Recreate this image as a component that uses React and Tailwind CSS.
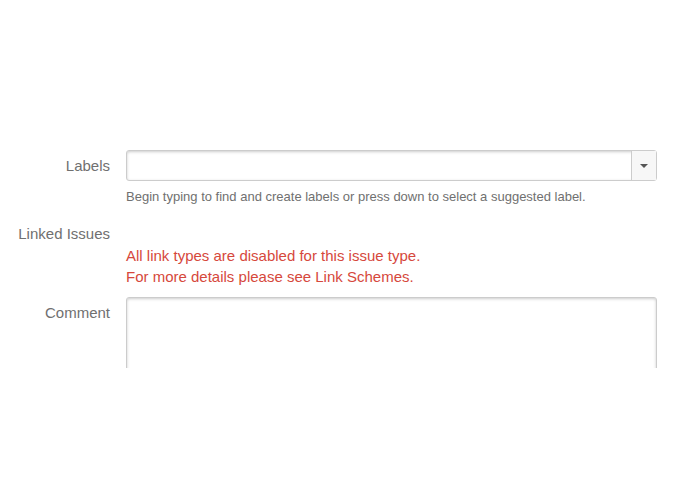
export default function App() {
  return (
    <div className="h-[494px] w-[695px] bg-white font-['Liberation_Sans',Arial,sans-serif]">
      <div className="h-[368px] overflow-hidden pt-[150px]">
        {/* Labels */}
        <div className="flex gap-4">
          <div className="w-[110px] shrink-0 pt-[6px] text-right text-[15px] leading-[20px] text-[#707070]">Labels</div>
          <div className="w-[531px]">
            <div className="flex h-[31px] rounded-[3px] border border-[#cccccc] shadow-[inset_0_1px_3px_#cccccc]">
              <div className="flex-1" />
              <div className="flex w-[25px] items-center justify-center border-l border-[#cccccc] bg-[#f7f7f7]">
                <svg width="8" height="4" viewBox="0 0 8 4">
                  <path d="M0 0h8L4 4z" fill="#555555" />
                </svg>
              </div>
            </div>
            <div className="mt-[8px] text-[13px] leading-[16px] text-[#707070]">
              Begin typing to find and create labels or press down to select a suggested label.
            </div>
          </div>
        </div>
        {/* Linked Issues */}
        <div className="mt-[19px] flex gap-4">
          <div className="w-[110px] shrink-0 text-right text-[15px] leading-[20px] text-[#707070]">Linked Issues</div>
          <div className="w-[531px] pt-[21px] text-[15px] leading-[21px] text-[#d6483c]">
            <div>All link types are disabled for this issue type.</div>
            <div>For more details please see Link Schemes.</div>
          </div>
        </div>
        {/* Comment */}
        <div className="mt-[10px] flex gap-4">
          <div className="w-[110px] shrink-0 pt-[6px] text-right text-[15px] leading-[20px] text-[#707070]">Comment</div>
          <div className="h-[120px] w-[531px] rounded-[3px] border border-[#cccccc] shadow-[inset_0_1px_3px_#cccccc]" />
        </div>
      </div>
    </div>
  );
}
